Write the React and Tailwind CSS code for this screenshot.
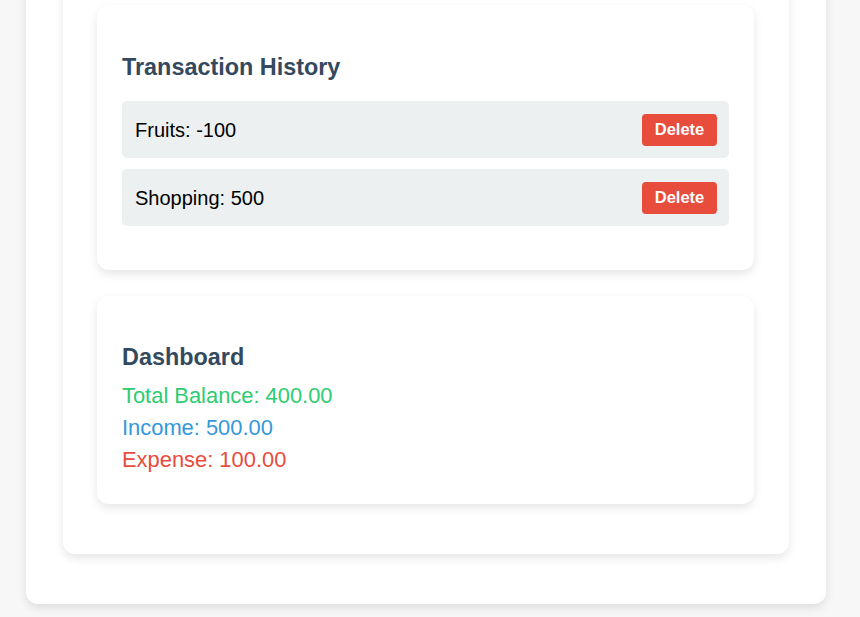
import React from "react";

const transactions = [
  { id: 1, text: "Fruits", amount: -100 },
  { id: 2, text: "Shopping", amount: 500 },
];

const cardShadow = "shadow-[0_4px_10px_rgba(0,0,0,0.1)]";

export default function App() {
  return (
    <div
      className="min-h-[617px] h-[617px] overflow-hidden bg-[#f7f7f7] text-[20px] text-black"
      style={{ fontFamily: '"Liberation Sans", Arial, sans-serif' }}
    >
      <div className={`-mt-[100px] ml-[26px] w-[800px] rounded-[12px] bg-white px-[37px] pt-[50px] pb-[50px] ${cardShadow}`}>
        <div className={`rounded-[12px] bg-white pl-[34px] pr-[35px] pt-[55px] pb-[50px] ${cardShadow}`}>
          {/* Transaction history */}
          <div className={`rounded-[12px] bg-white px-[25px] pt-[25px] pb-[44px] ${cardShadow}`}>
            <h3 className="mt-[24px] mb-[21px] text-[23.4px] font-bold leading-[26px] text-[#34495e]">
              Transaction History
            </h3>
            <ul className="flex flex-col gap-[11px]">
              {transactions.map((t) => (
                <li
                  key={t.id}
                  className="flex h-[57px] items-center justify-between rounded-[5px] bg-[#ecf0f1] pl-[13px] pr-[12px]"
                >
                  <span>
                    {t.text}: {t.amount}
                  </span>
                  <button className="flex h-[32px] w-[75px] items-center justify-center rounded-[4px] bg-[#e74c3c] text-[16.5px] font-bold text-white">
                    Delete
                  </button>
                </li>
              ))}
            </ul>
          </div>

          {/* Dashboard */}
          <div className={`mt-[26px] rounded-[12px] bg-white px-[25px] pt-[24px] pb-[28px] ${cardShadow}`}>
            <h3 className="mt-[24px] mb-[10px] text-[23.4px] font-bold leading-[26px] text-[#34495e]">
              Dashboard
            </h3>
            <div className="text-[21.9px] leading-[32px]">
              <p className="text-[#2ecc71]">Total Balance: 400.00</p>
              <p className="text-[#3498db]">Income: 500.00</p>
              <p className="text-[#e74c3c]">Expense: 100.00</p>
            </div>
          </div>
        </div>
      </div>
    </div>
  );
}
